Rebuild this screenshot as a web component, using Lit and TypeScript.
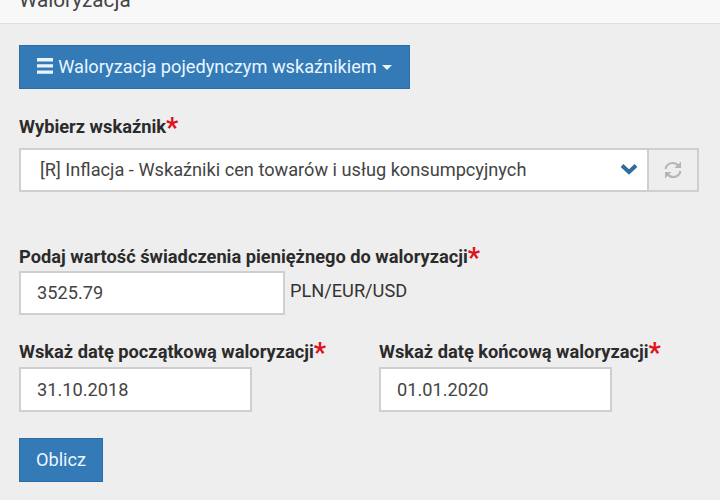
import { LitElement, html, css } from "lit";
import { customElement } from "lit/decorators.js";

@customElement("app-root")
export class AppRoot extends LitElement {
  static styles = css`
    :host {
      display: block;
      width: 720px;
      height: 500px;
      overflow: hidden;
      background: #eeeeee;
      font-family: Roboto, "Liberation Sans", sans-serif;
      color: #333;
      font-size: 18.2px;
    }
    .head {
      height: 23px;
      box-sizing: content-box;
      background: #f8f8f8;
      border-bottom: 1px solid #dedede;
      padding-left: 19px;
      display: flex;
      align-items: flex-end;
      overflow: hidden;
      font-size: 20.7px;
      line-height: 24px;
      color: #444;
    }
    .head span { margin-bottom: 11px; white-space: nowrap; }
    .body {
      padding: 21px 21px 0 19px;
      display: flex;
      flex-direction: column;
      align-items: flex-start;
    }
    .btn {
      box-sizing: border-box;
      background: #337ab7;
      border: 1px solid #2e6da4;
      color: #eaf6ff;
      font: inherit;
      font-size: 18.2px;
      display: flex;
      align-items: center;
      justify-content: center;
      padding: 0 0 2px;
    }
    .menu { width: 391px; height: 44px; gap: 5px; }
    .caret {
      width: 0; height: 0;
      border-left: 5px solid transparent;
      border-right: 5px solid transparent;
      border-top: 5px solid #eaf6ff;
      margin-left: 0;
      margin-top: 2px;
    }
    label {
      display: block;
      font-weight: 700;
      font-size: 18.25px;
      line-height: 22px;
      color: #2b2b2b;
      white-space: nowrap;
    }
    .star { color: #e0121a; font-size: 27px; line-height: 20px; vertical-align: -4px; font-weight: 700; }
    .l1 { margin-top: 27px; }
    .sel {
      margin-top: 10px;
      display: flex;
      width: 680px;
      height: 44px;
    }
    .sel .val {
      flex: 1;
      box-sizing: border-box;
      background: #fff;
      border: 2px solid #cfcfcf;
      display: flex;
      align-items: center;
      justify-content: space-between;
      padding: 0 9px 2px 19px;
      color: #444;
    }
    .sel .val svg { display: block; }
    .refresh {
      box-sizing: border-box;
      width: 50px;
      border: 2px solid #cfcfcf;
      border-left: none;
      background: #eeeeee;
      display: flex;
      align-items: center;
      justify-content: center;
    }
    .l2 { margin-top: 54px; }
    .amount {
      margin-top: 3px;
      display: flex;
      align-items: flex-start;
      gap: 5px;
    }
    .field {
      box-sizing: border-box;
      background: #fff;
      border: 2px solid #cfcfcf;
      height: 44px;
      display: flex;
      align-items: center;
      padding: 0 0 1px 16px;
      color: #444;
    }
    .f-amount { width: 266px; }
    .unit { line-height: 40px; color: #333; }
    .dates {
      margin-top: 26px;
      display: grid;
      grid-template-columns: 360px 233px;
    }
    .dates .field { width: 233px; height: 45px; margin-top: 4px; }
    .ok { width: 84px; height: 44px; margin-top: 26px; }
  `;

  render() {
    const star = html`<span class="star">*</span>`;
    return html`
      <div class="head"><span>Waloryzacja</span></div>
      <div class="body">
        <button class="btn menu">
          <svg width="16" height="16" viewBox="0 0 16 16" aria-hidden="true">
            <path fill="#eaf6ff" d="M0 0h16v3.4H0zM0 6.2h16v3.4H0zM0 12.4h16v3.4H0z" />
          </svg>
          <span>Waloryzacja pojedynczym wskaźnikiem</span>
          <span class="caret"></span>
        </button>
        <label class="l1">Wybierz wskaźnik${star}</label>
        <div class="sel">
          <div class="val">
            <span>[R] Inflacja - Wskaźniki cen towarów i usług konsumpcyjnych</span>
            <svg width="18" height="12" viewBox="0 0 18 12" aria-hidden="true">
              <path fill="none" stroke="#2d6c9f" stroke-width="4" d="M2 2.5l7 6.5 7-6.5" />
            </svg>
          </div>
          <div class="refresh">
            <svg width="20" height="20" viewBox="0 0 20 20" aria-hidden="true">
              <path fill="none" stroke="#b5b5b5" stroke-width="2.2"
                d="M2.5 9C3.2 5.4 6.2 3 9.8 3c2.6 0 4.6 1.2 6 3.2M17.5 11c-.7 3.6-3.7 6-7.3 6-2.6 0-4.6-1.2-6-3.2" />
              <path fill="#b5b5b5" d="M18 1.5V8h-6.5zM2 18.5V12h6.5z" />
            </svg>
          </div>
        </div>
        <label class="l2">Podaj wartość świadczenia pieniężnego do waloryzacji${star}</label>
        <div class="amount">
          <div class="field f-amount">3525.79</div>
          <span class="unit">PLN/EUR/USD</span>
        </div>
        <div class="dates">
          <div>
            <label>Wskaż datę początkową waloryzacji${star}</label>
            <div class="field">31.10.2018</div>
          </div>
          <div>
            <label>Wskaż datę końcową waloryzacji${star}</label>
            <div class="field">01.01.2020</div>
          </div>
        </div>
        <button class="btn ok">Oblicz</button>
      </div>
    `;
  }
}
